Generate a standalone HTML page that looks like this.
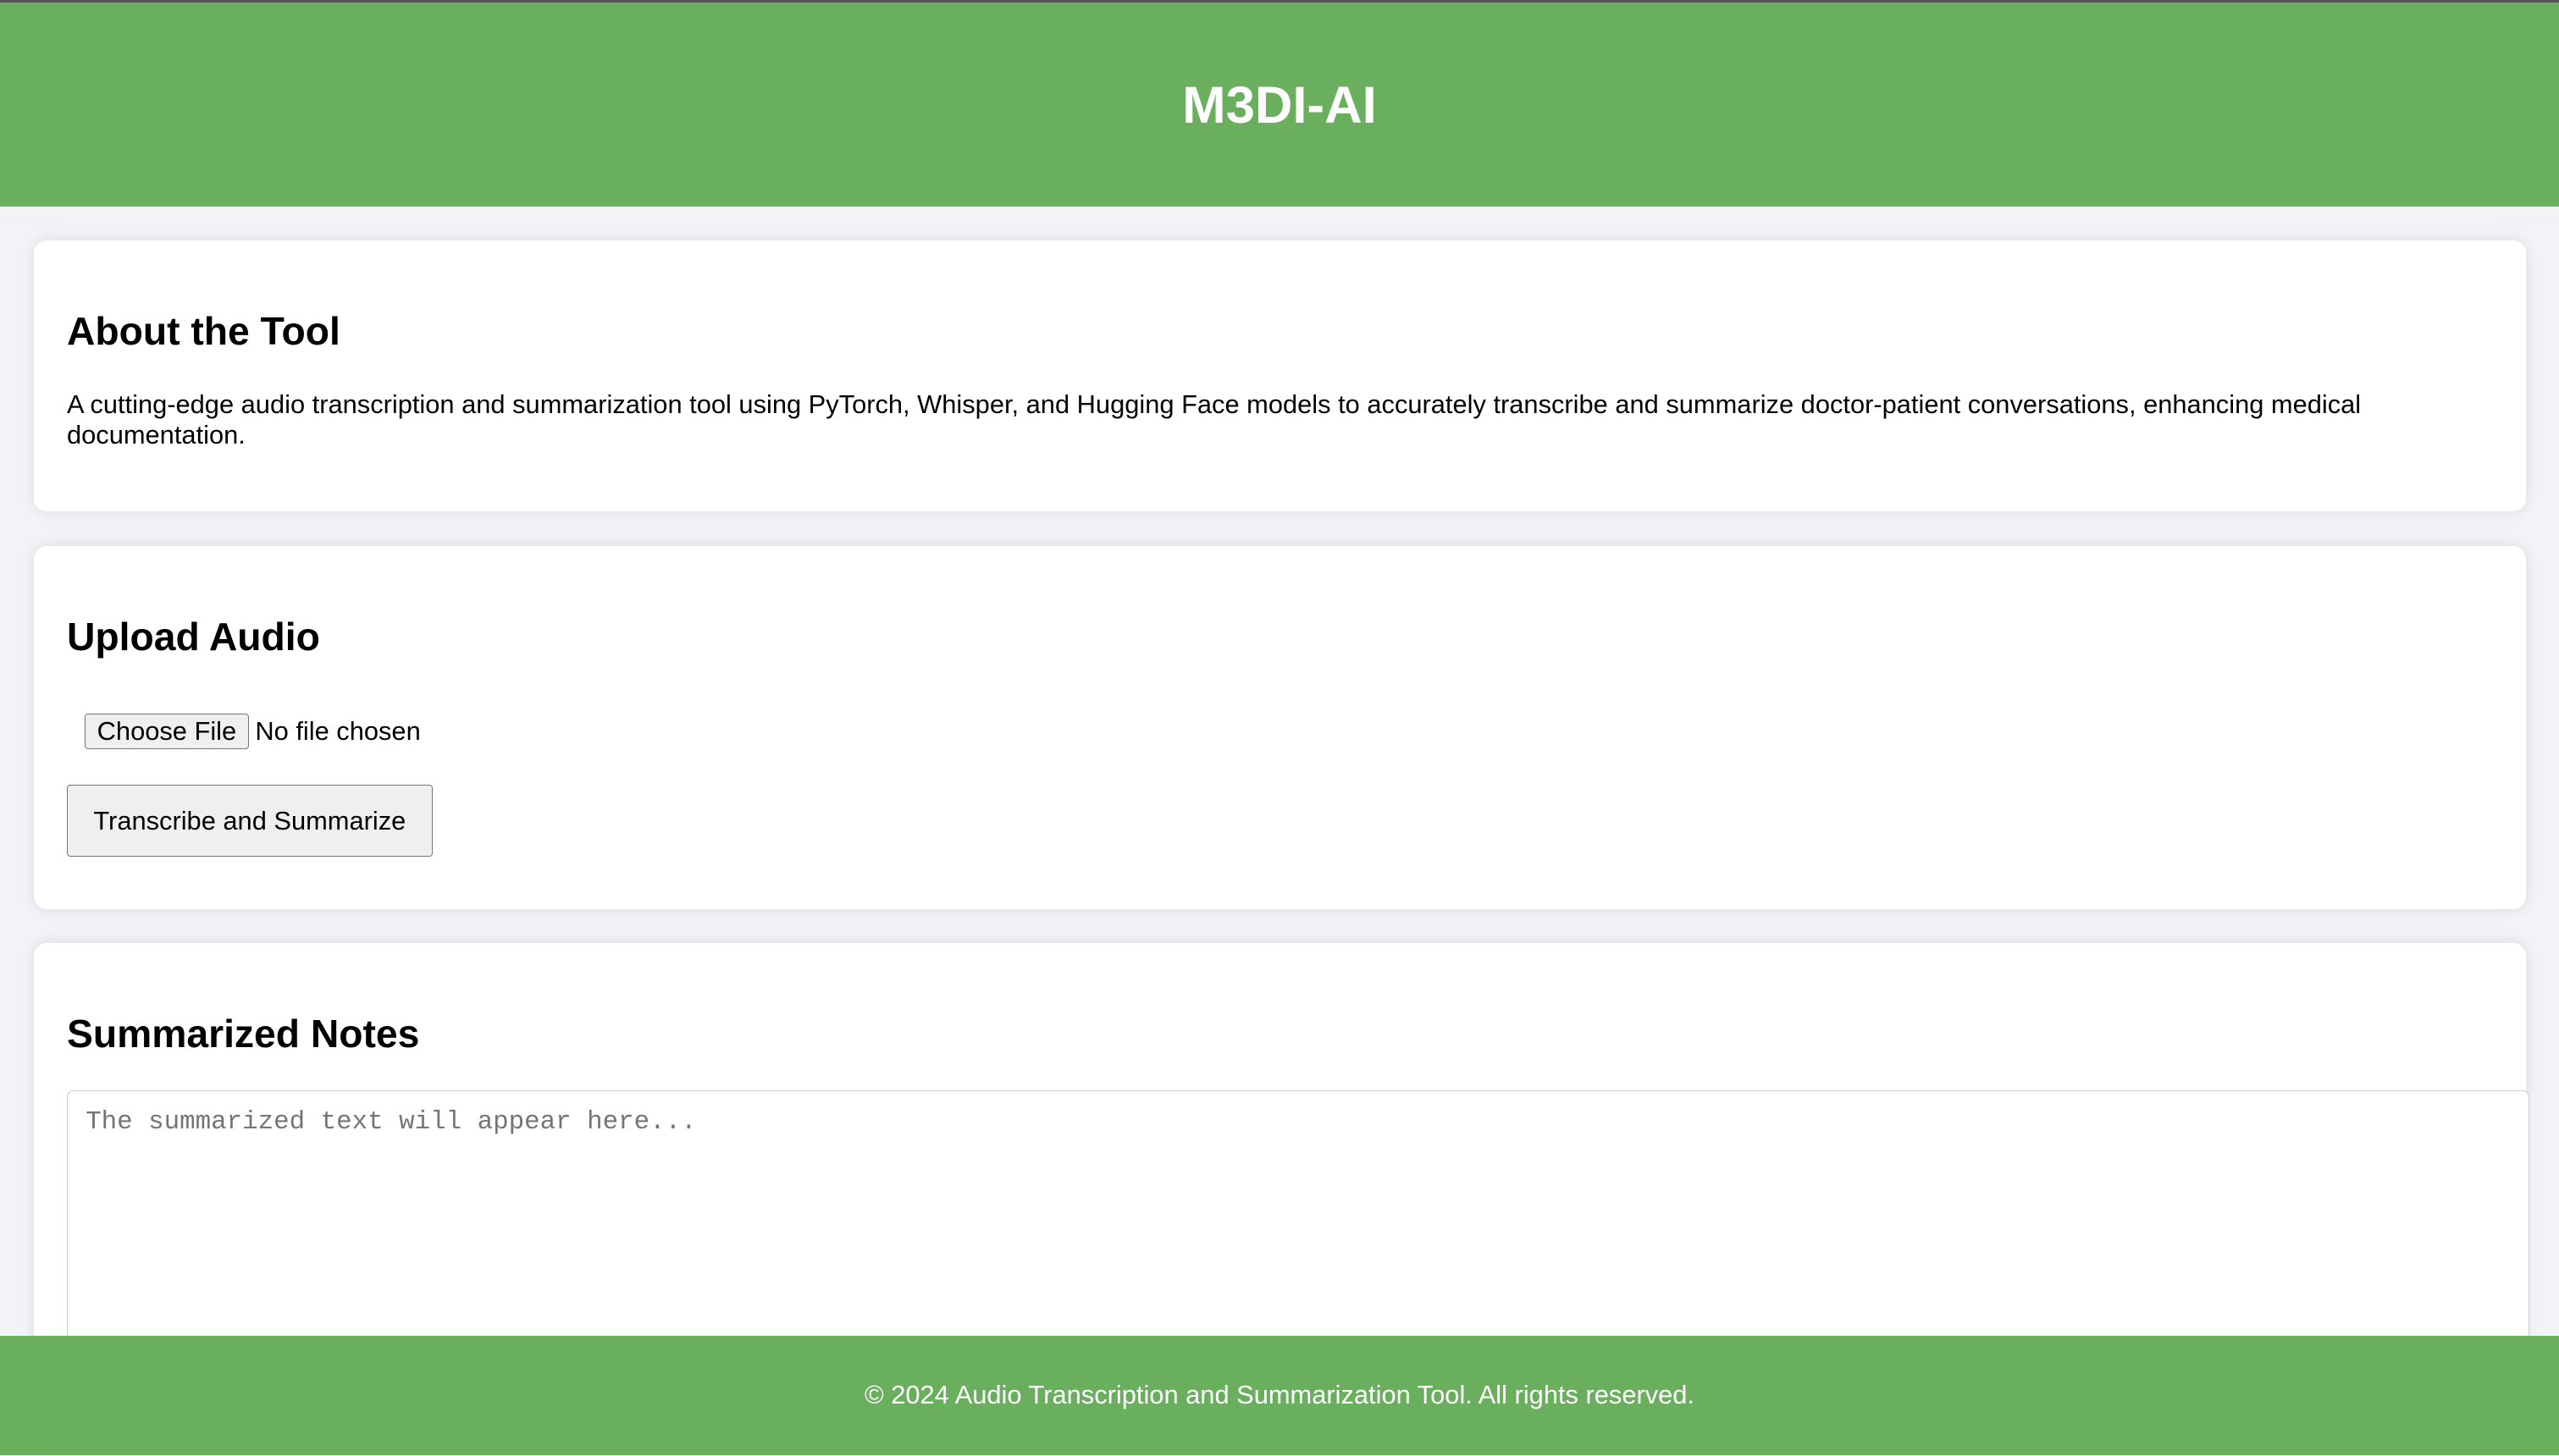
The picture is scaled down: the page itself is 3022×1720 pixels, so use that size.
<!DOCTYPE html>
<html><head><meta charset="utf-8"><style>
html{zoom:1.9273}
body{margin:0;background:#f3f2f7;font-family:"Liberation Sans",Arial,sans-serif;color:#000;width:1568px;height:892px;overflow:hidden;position:relative}
header{background:#6aaf5e;border-top:2px solid #555;height:125px;color:#fff;text-align:center}
header h1{margin:0;padding-top:43px;font-size:32px;line-height:40px}
.card{background:#fff;margin:21px 20px 0 21px;border-radius:8px;box-shadow:0 0 8px rgba(0,0,0,.1);padding:20px}
.card h2{font-size:24px;margin:21px 0 20px;line-height:30px}
.card p{font-size:16px;margin:0 0 17px;line-height:19px}
.file{margin:32px 0 0 11px;font-size:16px;display:flex;align-items:center}
.file span.b{border:1px solid #767676;background:#efefef;border-radius:2px;padding:1px 7px;margin-right:4px}
button{margin-top:22px;font-family:inherit;font-size:16px;background:#efefef;border:1px solid #767676;border-radius:2px;padding:0 12px;height:44px;width:224px}
textarea{display:block;width:1509px;height:200px;border:1px solid #ccc;border-radius:4px;font-family:"Liberation Mono",monospace;font-size:16px;padding:10px 11px;box-sizing:border-box;resize:none}
textarea::placeholder{color:#757575}
footer{position:absolute;left:0;right:0;top:819px;height:73px;background:#6aaf5e;color:#fff;text-align:center;font-size:16px;line-height:73px}
</style></head><body>
<header><h1>M3DI-AI</h1></header>
<div class="card"><h2>About the Tool</h2><p>A cutting-edge audio transcription and summarization tool using PyTorch, Whisper, and Hugging Face models to accurately transcribe and summarize doctor-patient conversations, enhancing medical documentation.</p></div>
<div class="card" style="padding-bottom:32px"><h2>Upload Audio</h2><div class="file"><span class="b">Choose File</span>No file chosen</div><button>Transcribe and Summarize</button></div>
<div class="card"><h2 style="margin-bottom:19px">Summarized Notes</h2><textarea placeholder="The summarized text will appear here..."></textarea></div>
<footer>© 2024 Audio Transcription and Summarization Tool. All rights reserved.</footer>
</body></html>
